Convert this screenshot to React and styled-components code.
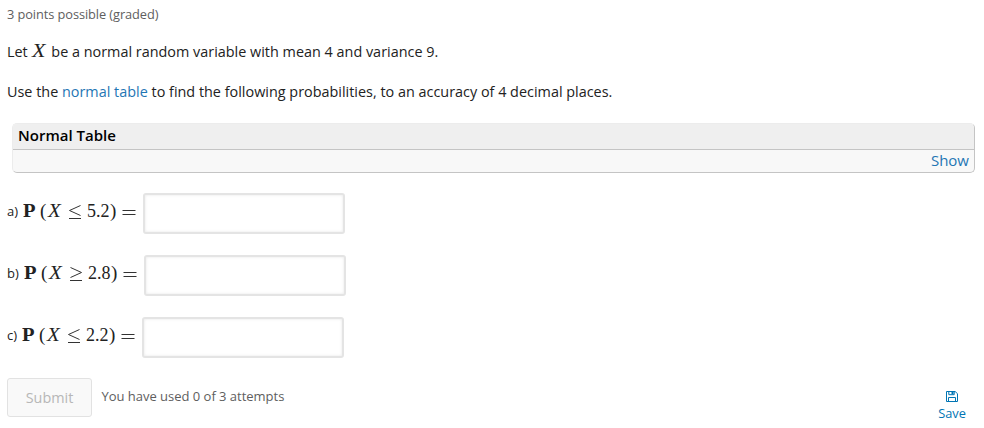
import React from "react";
import styled, { createGlobalStyle } from "styled-components";

const Global = createGlobalStyle`
  * { box-sizing: border-box; }
  body {
    margin: 0;
    background: #fff;
    color: #222;
    font-family: "Open Sans", "Noto Sans", sans-serif;
  }
`;

const Problem = styled.main`
  display: flex;
  flex-direction: column;
  width: 984px;
  height: 428px;
  padding-left: 7px;
  overflow: hidden;
`;

const Progress = styled.div`
  height: 31px;
  line-height: 29px;
  font-size: 12.8px;
  letter-spacing: -0.08px;
  color: #5e5e5e;
`;

const Paragraph = styled.p`
  margin: 0;
  height: 40px;
  line-height: 41px;
  font-size: 14.4px;
  letter-spacing: 0.005px;
  white-space: nowrap;
`;

const MathX = styled.i`
  display: inline-block;
  font-family: "Liberation Serif", serif;
  font-size: ${(p) => p.$size}px;
  line-height: 1;
  transform: scaleX(1.16);
  transform-origin: left;
`;

const Link = styled.a`
  color: #1f76b4;
  text-decoration: none;
`;

const InlineMath = styled.span`
  margin: 0 3.5px 0 1px;
`;

const Panel = styled.section`
  margin: 12px 9px 0 5px;
  height: 50px;
  flex: none;
  border: 1px solid #c4c4c4;
  border-top-color: #ececec;
  border-left-color: #ececec;
  border-radius: 5px;
  overflow: hidden;
  background: #f8f8f8;
`;

const PanelTitle = styled.div`
  height: 26px;
  line-height: 23px;
  padding-left: 5px;
  border-bottom: 1px solid #c4c4c4;
  background: #efefef;
  color: #000;
  font-size: 15px;
  font-weight: 600;
`;

const PanelAction = styled.div`
  height: 22px;
  line-height: 21px;
  padding-right: 5px;
  text-align: right;
  font-size: 15px;
`;

const Questions = styled.div`
  margin-top: 9px;
`;

const Question = styled.label`
  display: flex;
  align-items: center;
  height: 62px;
`;

const Letter = styled.span`
  width: ${(p) => p.$width}px;
  padding-bottom: 5px;
  line-height: 20px;
  font-size: 13px;
`;

const Formula = styled.span`
  display: grid;
  grid-template-columns: 17px 8px 20px 19px 23px 12px 21px;
  align-items: baseline;
  height: 26px;
  margin-left: -1px;
  line-height: 22px;
  font-family: "Liberation Serif", serif;
  font-size: 18px;
  white-space: nowrap;
`;

const Bold = styled.b`
  transform: scaleX(1.14);
  transform-origin: left;
`;

const Paren = styled.span`
  font-size: 19px;
`;

const Digits = styled.span`
  font-size: 18px;
`;

const Sign = styled.svg`
  align-self: start;
  width: 14px;
  height: 22px;
  fill: none;
  stroke: #333;
  stroke-width: 1;
`;

const signPaths = {
  "≤": "M12.5 5.5L1.5 10.5L12.5 15.5M1 18.5H13",
  "≥": "M1.5 5.5L12.5 10.5L1.5 15.5M1 18.5H13",
  "=": "M.5 10.5H13.5M.5 14.5H13.5",
};

const MathSign = ({ sign }) => (
  <Sign viewBox="0 0 14 22" role="img" aria-label={sign}>
    <path d={signPaths[sign]} />
  </Sign>
);

const Answer = styled.input`
  width: 202px;
  height: 41px;
  border: 2px solid #e4e4e4;
  border-radius: 3px;
  background: #fff;
  box-shadow: inset 0 0 3px #e6e6e6;
  outline: none;
`;

const Footer = styled.footer`
  display: flex;
  align-items: flex-start;
  padding-top: 10px;
`;

const Submit = styled.button`
  width: 85px;
  height: 39px;
  padding: 0;
  border: 1px solid #e2e2e2;
  border-radius: 3px;
  background: #f9f9f9;
  color: #b7b7b7;
  font: 14.4px "Open Sans", sans-serif;
`;

const Attempts = styled.span`
  margin-left: 9.5px;
  line-height: 37px;
  font-size: 13px;
  letter-spacing: -0.02px;
  color: #5e5e5e;
`;

const Save = styled.a`
  display: flex;
  flex-direction: column;
  align-items: center;
  width: 30px;
  margin: 13px 17px 0 auto;
  color: #0075b4;
  font-size: 12.8px;
  line-height: 22px;
`;

const FloppyIcon = () => (
  <svg width="12" height="11" viewBox="0 0 12 11" fill="none" stroke="currentColor">
    <path d="M.5.5h8.6l2.4 2.2v7.8H.5zM2.5 10V6.5h7V10M2.8.5v3.2h5.4V.5" />
    <path d="M5.5 1h2v2.2h-2z" fill="currentColor" stroke="none" />
  </svg>
);

const questions = [
  { letter: "a)", width: 17, sign: "≤", value: "5.2" },
  { letter: "b)", width: 18, sign: "≥", value: "2.8" },
  { letter: "c)", width: 16, sign: "≤", value: "2.2" },
];

export default function App() {
  return (
    <>
      <Global />
      <Problem>
        <Progress>3 points possible (graded)</Progress>
        <Paragraph>
          Let <InlineMath><MathX $size={19}>X</MathX></InlineMath> be a normal random variable with mean 4 and variance 9.
        </Paragraph>
        <Paragraph>
          Use the <Link>normal table</Link> to find the following probabilities, to an accuracy of 4 decimal places.
        </Paragraph>
        <Panel>
          <PanelTitle>Normal Table</PanelTitle>
          <PanelAction><Link>Show</Link></PanelAction>
        </Panel>
        <Questions>
          {questions.map((q) => (
            <Question key={q.letter}>
              <Letter $width={q.width}>{q.letter}</Letter>
              <Formula>
                <Bold>P</Bold>
                <Paren>(</Paren>
                <MathX $size={18}>X</MathX>
                <MathSign sign={q.sign} />
                <Digits>{q.value}</Digits>
                <Paren>)</Paren>
                <MathSign sign="=" />
              </Formula>
              <Answer aria-label={q.letter} />
            </Question>
          ))}
        </Questions>
        <Footer>
          <Submit disabled>Submit</Submit>
          <Attempts>You have used 0 of 3 attempts</Attempts>
          <Save><FloppyIcon />Save</Save>
        </Footer>
      </Problem>
    </>
  );
}
